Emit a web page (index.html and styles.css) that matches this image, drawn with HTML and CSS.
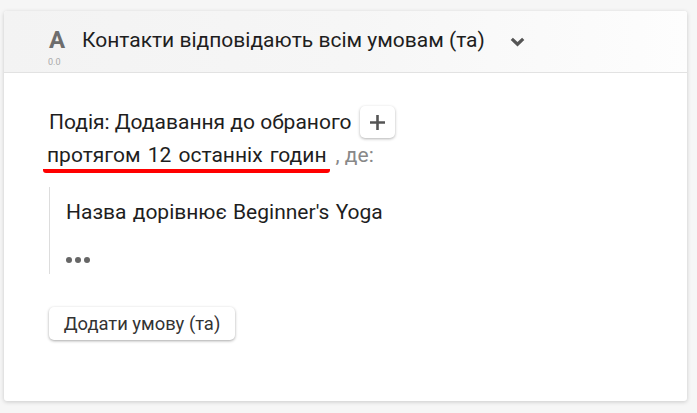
FILE: index.html
```html
<!DOCTYPE html>
<html>
<head>
<meta charset="utf-8">
<link rel="stylesheet" href="styles.css">
</head>
<body>
<div class="card">
  <div class="header">
    <div class="badge">
      <span class="letter">A</span>
      <span class="ver">0.0</span>
    </div>
    <span class="title">Контакти відповідають всім умовам (та)</span>
    <svg class="chev" width="15" height="10" viewBox="0 0 15 10"><path d="M1.8 1.8 L7.5 7.2 L13.2 1.8" fill="none" stroke="#555" stroke-width="3.2"/></svg>
  </div>
  <div class="body">
    <div class="line1">
      <span>Подія: Додавання до обраного</span>
      <span class="plus"><svg width="17" height="17" viewBox="0 0 17 17"><path d="M8.5 1 V16 M1 8.5 H16" stroke="#555" stroke-width="2.6"/></svg></span>
    </div>
    <div class="line2">
      <span class="period">протягом 12 останніх годин</span><span class="de">, де:</span>
    </div>
    <div class="conds">
      <div class="cond">Назва дорівнює Beginner's Yoga</div>
      <div class="dots"><i></i><i></i><i></i></div>
    </div>
    <button class="add">Додати умову (та)</button>
  </div>
</div>
</body>
</html>
```
FILE: styles.css
```css
html, body { margin: 0; padding: 0; }
body {
  background: #f6f6f6;
  font-family: Roboto, "Noto Sans", sans-serif;
  width: 697px;
  height: 413px;
  padding: 11px 0 0 4px;
  box-sizing: border-box;
}
.card {
  width: 683px;
  height: 390px;
  background: #fff;
  border-radius: 3px;
  box-shadow: 0 1px 4px rgba(0,0,0,0.18);
  overflow: hidden;
}
.header {
  height: 62px;
  box-sizing: border-box;
  border-bottom: 1px solid #e2e2e2;
  background: linear-gradient(to right, #f3f3f3 0%, #f6f6f6 50%, #fdfdfd 100%);
  display: flex;
  align-items: flex-start;
  padding: 16px 0 0 44px;
}
.badge {
  display: flex;
  flex-direction: column;
  align-items: flex-start;
  width: 34px;
}
.letter {
  font-size: 24px;
  font-weight: 700;
  color: #6d6d6d;
  line-height: 26px;
  margin-left: 1px;
}
.ver {
  font-size: 9px;
  color: #aaa;
  line-height: 10px;
  margin-top: 4px;
}
.title {
  font-size: 21px;
  color: #1e1e1e;
  line-height: 26px;
}
.chev { margin: 10px 0 0 25px; }
.body {
  padding: 33px 0 0 45px;
}
.line1 {
  display: flex;
  align-items: center;
  font-size: 21px;
  color: #1e1e1e;
  height: 32px;
}
.plus {
  width: 35px;
  height: 32px;
  box-sizing: border-box;
  margin-left: 8px;
  border-radius: 5px;
  background: #fff;
  box-shadow: 0 1px 3px rgba(0,0,0,0.3);
  display: flex;
  align-items: center;
  justify-content: center;
}
.line2 {
  margin-top: 4px;
  font-size: 21px;
  line-height: 26px;
  color: #1e1e1e;
}
.period {
  word-spacing: 2px;
  display: inline-block;
  padding: 0 3px 1px 4px;
  margin-left: -6px;
  border-bottom: 4px solid #f00;
  border-radius: 3px;
}
.de { color: #888; margin-left: 6px; }
.conds {
  margin-top: 14px;
  border-left: 1px solid #ddd;
  padding: 12px 0 8px 16px;
  height: 67px;
}
.cond {
  font-size: 21px;
  color: #1e1e1e;
  word-spacing: 1px;
  line-height: 26px;
}
.dots {
  display: flex;
  gap: 3px;
  margin-top: 32px;
}
.dots i {
  width: 6px;
  height: 6px;
  border-radius: 50%;
  background: #666;
}
.add {
  margin-top: 33px;
  width: 186px;
  height: 33px;
  border: none;
  border-radius: 5px;
  background: #fff;
  box-shadow: 0 1px 3px rgba(0,0,0,0.35);
  font-family: Roboto, "Noto Sans", sans-serif;
  font-size: 18.4px;
  color: #333;
  padding: 0;
}
```
